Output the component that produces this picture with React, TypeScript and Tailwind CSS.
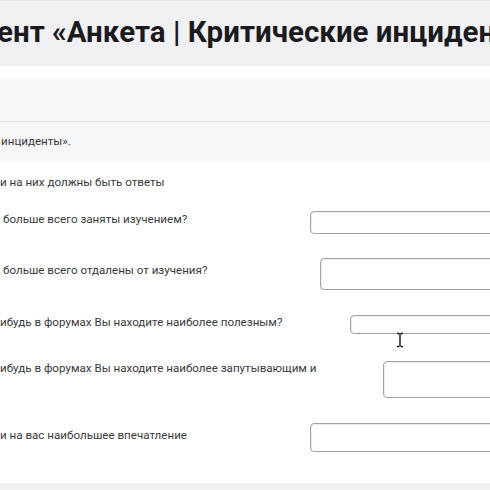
import React from "react";

type Row = {
  text: string;
  mt: number;
  labelMt: number;
  labelPl: number;
  inputX: number;
  inputMt: number;
  inputH: number;
};

const rows: Row[] = [
  { text: "больше всего заняты изучением?", mt: 21, labelMt: 0, labelPl: 3, inputX: 310, inputMt: 0, inputH: 23 },
  { text: "больше всего отдалены от изучения?", mt: 24, labelMt: 4, labelPl: 3, inputX: 320, inputMt: 0, inputH: 32 },
  { text: "ибудь в форумах Вы находите наиболее полезным?", mt: 24, labelMt: 0, labelPl: 0, inputX: 350, inputMt: 1, inputH: 19 },
  { text: "ибудь в форумах Вы находите наиболее запутывающим и", mt: 26, labelMt: 0, labelPl: 0, inputX: 383, inputMt: 1, inputH: 37 },
  { text: "и на вас наибольшее впечатление", mt: 25, labelMt: 4, labelPl: 0, inputX: 310, inputMt: 0, inputH: 29 },
];

export default function App() {
  return (
    <div
      className="w-[490px] h-[490px] overflow-hidden bg-white relative"
      style={{ fontFamily: "Roboto, 'Liberation Sans', sans-serif" }}
    >
      <div className="h-[66px] bg-[#f1f1f4] border-t border-[#e9e9ec] flex items-center overflow-hidden">
        <h1 className="text-[29.5px] leading-none font-bold text-[#1b1b1f] whitespace-nowrap -ml-[3px] -mt-[2px]">
          ент «Анкета | Критические инциденты»
        </h1>
      </div>
      <div className="h-[12px]" />
      <div className="h-[44px] bg-[#f7f7f9] border-b border-[#e2e2e6]" />
      <div className="h-[40px] bg-[#f7f7f9] flex items-center pl-[1px]">
        <span className="text-[11.6px] text-[#3a3a3a] whitespace-nowrap">инциденты».</span>
      </div>
      <div className="mt-[12px] h-[16px] text-[11.6px] leading-[16px] text-[#3a3a3a] whitespace-nowrap">
        и на них должны быть ответы
      </div>
      {rows.map((r, i) => (
        <div key={i} className="flex items-start" style={{ marginTop: r.mt }}>
          <div
            className="shrink-0 text-[11.6px] leading-[16px] text-[#3a3a3a] whitespace-nowrap"
            style={{ width: r.inputX, marginTop: r.labelMt, paddingLeft: r.labelPl }}
          >
            {r.text}
          </div>
          <div
            className="shrink-0 w-[240px] rounded-[4px] border border-[#a3a3a3] bg-white shadow-[inset_1px_1px_1px_rgba(0,0,0,0.08)]"
            style={{ marginTop: r.inputMt, height: r.inputH }}
          />
        </div>
      ))}
      <div className="absolute left-0 right-0 bottom-0 h-[7px] bg-[#f1f1f4]" />
      <svg className="absolute left-[395px] top-[332px]" width="10" height="16" viewBox="0 0 10 16">
        <path d="M2 1.5h2.5M5.5 1.5H8M5 2v12M2 14.5h2.5M5.5 14.5H8" stroke="#111" strokeWidth="1.4" fill="none" />
      </svg>
    </div>
  );
}
